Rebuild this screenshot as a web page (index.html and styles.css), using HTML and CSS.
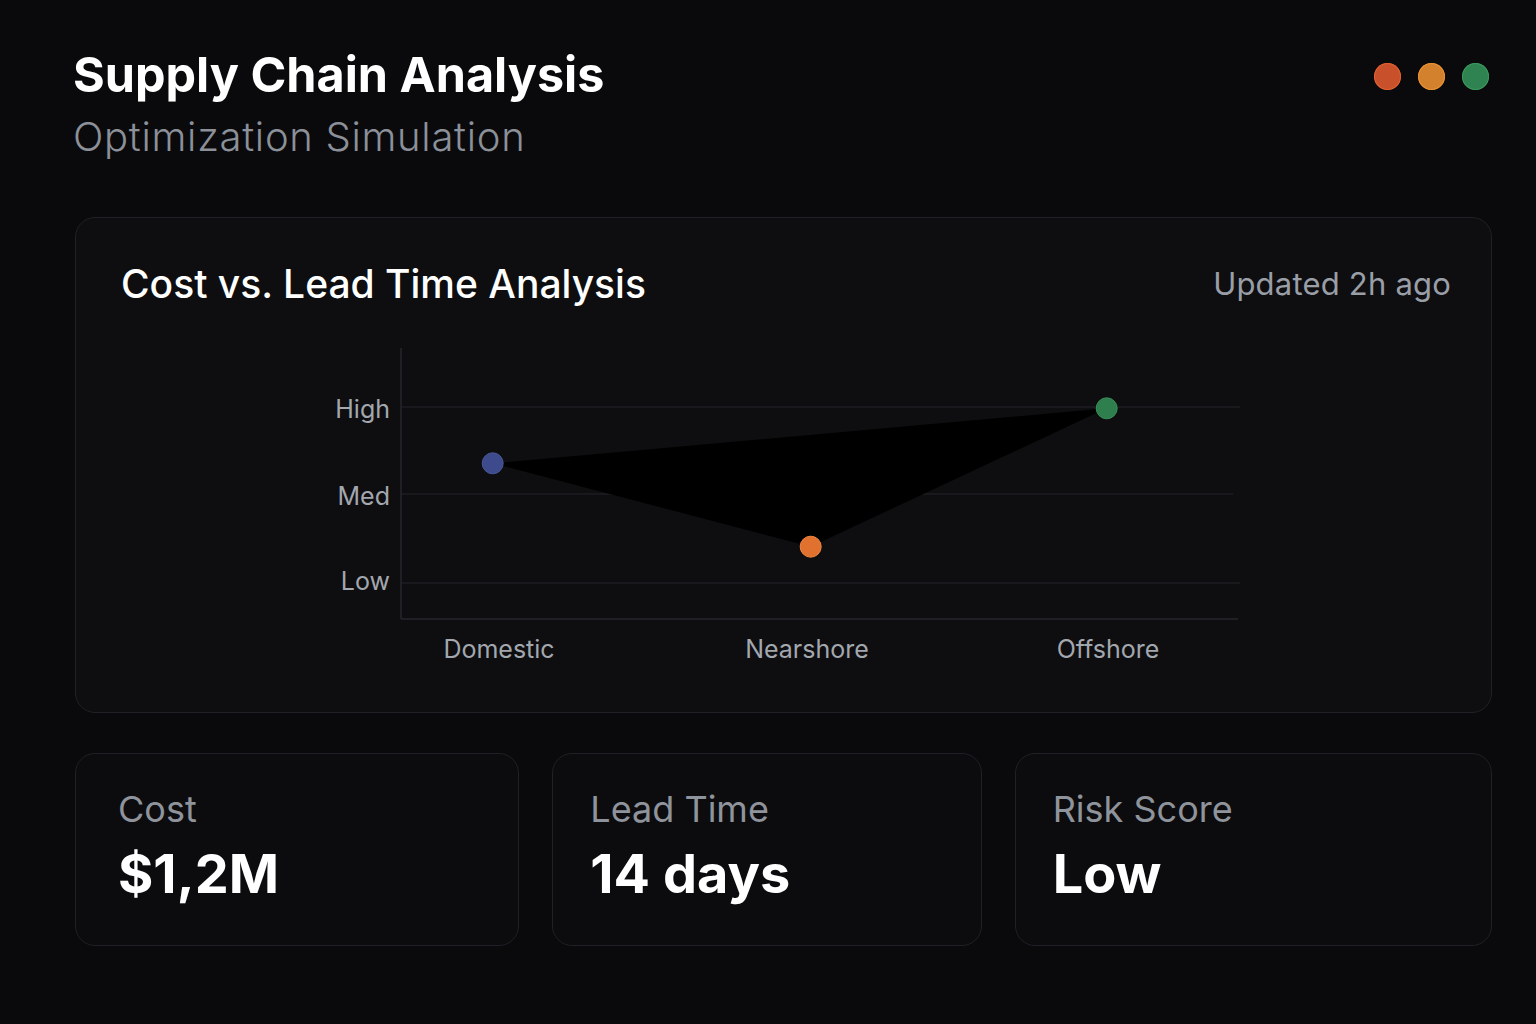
FILE: index.html
```html
<!DOCTYPE html>
<html lang="en">
<head>
<meta charset="utf-8">
<title>Supply Chain Analysis</title>
<link rel="stylesheet" href="styles.css">
</head>
<body>
<div class="page">
  <header class="top">
    <div class="heading">
      <h1 class="title">Supply Chain Analysis</h1>
      <p class="subtitle">Optimization Simulation</p>
    </div>
    <div class="dots">
      <span class="dot dot-red"></span>
      <span class="dot dot-orange"></span>
      <span class="dot dot-green"></span>
    </div>
  </header>

  <section class="card chart-card">
    <div class="card-head">
      <h2 class="card-title">Cost vs. Lead Time Analysis</h2>
      <span class="updated">Updated 2h ago</span>
    </div>
    <svg class="chart" viewBox="0 0 1415 350" width="1415" height="350">
      <g class="grid">
        <line x1="325" y1="77" x2="1164" y2="77"/>
        <line x1="325" y1="164" x2="1157" y2="164"/>
        <line x1="325" y1="253" x2="1164" y2="253"/>
      </g>
      <g class="axis">
        <line x1="325" y1="18" x2="325" y2="289"/>
        <line x1="325" y1="289" x2="1162" y2="289"/>
      </g>
      <g class="ylabels">
        <text x="314" y="88">High</text>
        <text x="314" y="175">Med</text>
        <text x="314" y="260">Low</text>
      </g>
      <g class="xlabels">
        <text x="423" y="328">Domestic</text>
        <text x="731" y="328">Nearshore</text>
        <text x="1032" y="328">Offshore</text>
      </g>
      <polygon class="area" points="416.7,133.3 734.7,216.7 1030.7,78.3"/>
      <circle class="pt pt-blue" cx="416.7" cy="133.3" r="10.5"/>
      <circle class="pt pt-orange" cx="734.7" cy="216.7" r="10.5"/>
      <circle class="pt pt-green" cx="1030.7" cy="78.3" r="10.5"/>
    </svg>
  </section>

  <section class="metrics">
    <div class="card metric metric-first">
      <div class="metric-label">Cost</div>
      <div class="metric-value">$1,2M</div>
    </div>
    <div class="card metric">
      <div class="metric-label">Lead Time</div>
      <div class="metric-value">14 days</div>
    </div>
    <div class="card metric">
      <div class="metric-label">Risk Score</div>
      <div class="metric-value">Low</div>
    </div>
  </section>
</div>
</body>
</html>
```

FILE: styles.css
```css
* { box-sizing: border-box; }

html, body {
  margin: 0;
  padding: 0;
  background: #0a0a0c;
}

body {
  width: 1536px;
  height: 1024px;
  overflow: hidden;
  font-family: Inter, "Noto Sans", "Liberation Sans", sans-serif;
  color: #ffffff;
}

.page {
  padding: 46px 44px 0 75px;
}

.top {
  display: flex;
  justify-content: space-between;
  align-items: flex-start;
}

.title {
  margin: 0 0 0 -2px;
  font-size: 48.5px;
  line-height: 57.6px;
  font-weight: 700;
  letter-spacing: 0;
  color: #ffffff;
}

.subtitle {
  margin: 9px 0 0 -2px;
  font-size: 40px;
  line-height: 48px;
  font-weight: 300;
  letter-spacing: 0.7px;
  color: #8b9099;
}

.dots {
  display: flex;
  gap: 17px;
  margin-top: 16.5px;
  margin-right: 3.5px;
}

.dot {
  width: 27px;
  height: 27px;
  border-radius: 50%;
  display: block;
}

.dot-red { background: #c8502b; box-shadow: inset 0 0 0 1px #e0622f; }
.dot-orange { background: #d3812d; box-shadow: inset 0 0 0 1px #ea9332; }
.dot-green { background: #2f8350; box-shadow: inset 0 0 0 1px #3a9a5e; }

.card {
  background: #0e0e11;
  border: 1px solid #202026;
  border-radius: 20px;
}

.chart-card {
  margin-top: 56px;
  padding: 0 0 32px 0;
}

.card-head {
  display: flex;
  justify-content: space-between;
  align-items: flex-start;
  padding: 43px 40px 0 45px;
  height: 112px;
}

.card-title {
  margin: 0;
  font-size: 39px;
  line-height: 46px;
  font-weight: 500;
  letter-spacing: 0;
  color: #ffffff;
}

.updated {
  margin-top: 4px;
  font-size: 31px;
  line-height: 37px;
  font-weight: 400;
  letter-spacing: 0.2px;
  color: #9a9ea7;
}

.chart {
  display: block;
}

.grid line {
  stroke: #1c1d22;
  stroke-width: 1.5;
}

.axis line {
  stroke: #26272d;
  stroke-width: 1.5;
}

.ylabels text {
  font-family: Inter, "Noto Sans", sans-serif;
  font-size: 25px;
  fill: #a3a7ae;
  text-anchor: end;
}

.xlabels text {
  font-family: Inter, "Noto Sans", sans-serif;
  font-size: 25px;
  fill: #a3a7ae;
  text-anchor: middle;
}

.area {
  fill: #000000;
}

.pt-blue { fill: #3d4a8b; stroke: #4b5899; stroke-width: 1; }
.pt-orange { fill: #e1712f; stroke: #f2873e; stroke-width: 1; }
.pt-green { fill: #2e7e4e; stroke: #379159; stroke-width: 1; }

.metrics {
  margin-top: 40px;
  display: grid;
  grid-template-columns: 445fr 430fr 478fr;
  gap: 33px;
}

.metric {
  padding: 33px 20px 39px 37px;
  background: #0c0c0f;
}

.metric-first {
  padding-left: 42px;
}

.metric-label {
  font-size: 36px;
  line-height: 44px;
  font-weight: 400;
  color: #8f939b;
}

.metric-value {
  margin-top: 11px;
  font-size: 54px;
  line-height: 64px;
  font-weight: 700;
  color: #ffffff;
}
```
